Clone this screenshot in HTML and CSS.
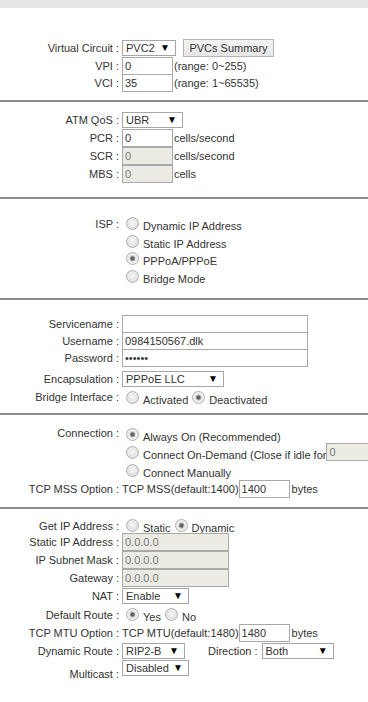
FILE: index.html
```html
<!DOCTYPE html>
<html>
  <head>
    <meta charset="UTF-8">
    <title>WAN Settings</title>
    <link rel="stylesheet" href="styles.css">
  </head>
  <body>
    <div class="topbar"></div>

    <div class="section s-pvc">
      <div class="row">
        <div class="lbl">Virtual Circuit :</div>
        <div class="fld">
          <span class="sel w-pvc"><select><option>PVC2</option></select></span>
          <button class="btn" type="button">PVCs Summary</button>
        </div>
      </div>
      <div class="row r17">
        <div class="lbl">VPI :</div>
        <div class="fld"><input class="txt w-s" type="text" value="0"><span class="note">(range: 0~255)</span></div>
      </div>
      <div class="row">
        <div class="lbl">VCI :</div>
        <div class="fld"><input class="txt w-s" type="text" value="35"><span class="note">(range: 1~65535)</span></div>
      </div>
    </div>
    <div class="sep"></div>

    <div class="section s-qos">
      <div class="row">
        <div class="lbl">ATM QoS :</div>
        <div class="fld"><span class="sel w-ubr"><select><option>UBR</option></select></span></div>
      </div>
      <div class="row">
        <div class="lbl">PCR :</div>
        <div class="fld"><input class="txt w-s" type="text" value="0"><span class="note">cells/second</span></div>
      </div>
      <div class="row">
        <div class="lbl">SCR :</div>
        <div class="fld"><input class="txt w-s" type="text" value="0" disabled><span class="note">cells/second</span></div>
      </div>
      <div class="row">
        <div class="lbl">MBS :</div>
        <div class="fld"><input class="txt w-s" type="text" value="0" disabled><span class="note">cells</span></div>
      </div>
    </div>
    <div class="sep"></div>

    <div class="section s-isp">
      <div class="row rr">
        <div class="lbl">ISP :</div>
        <div class="fld"><input class="rad" type="radio" name="isp"><span class="opt">Dynamic IP Address</span></div>
      </div>
      <div class="row rr">
        <div class="lbl"></div>
        <div class="fld"><input class="rad" type="radio" name="isp"><span class="opt">Static IP Address</span></div>
      </div>
      <div class="row rr">
        <div class="lbl"></div>
        <div class="fld"><input class="rad" type="radio" name="isp" checked><span class="opt">PPPoA/PPPoE</span></div>
      </div>
      <div class="row rr">
        <div class="lbl"></div>
        <div class="fld"><input class="rad" type="radio" name="isp"><span class="opt">Bridge Mode</span></div>
      </div>
    </div>
    <div class="sep"></div>

    <div class="section s-ppp">
      <div class="row r17">
        <div class="lbl">Servicename :</div>
        <div class="fld"><input class="txt w-l" type="text" value=""></div>
      </div>
      <div class="row r17">
        <div class="lbl">Username :</div>
        <div class="fld"><input class="txt w-l" type="text" value="0984150567.dlk"></div>
      </div>
      <div class="row r17">
        <div class="lbl">Password :</div>
        <div class="fld"><input class="txt w-l" type="password" value="123456"></div>
      </div>
      <div class="row r-encap">
        <div class="lbl">Encapsulation :</div>
        <div class="fld"><span class="sel w-encap"><select><option>PPPoE LLC</option></select></span></div>
      </div>
      <div class="row r16">
        <div class="lbl">Bridge Interface :</div>
        <div class="fld">
          <input class="rad" type="radio" name="bridge"><span class="opt">Activated</span>
          <input class="rad" type="radio" name="bridge" checked><span class="opt">Deactivated</span>
        </div>
      </div>
    </div>
    <div class="sep"></div>

    <div class="section s-conn">
      <div class="row">
        <div class="lbl lbl-up">Connection :</div>
        <div class="fld"><input class="rad" type="radio" name="conn" checked><span class="opt">Always On (Recommended)</span></div>
      </div>
      <div class="row">
        <div class="lbl"></div>
        <div class="fld"><input class="rad" type="radio" name="conn"><span class="opt">Connect On-Demand (Close if idle for</span><input class="txt w-idle" type="text" value="0" disabled></div>
      </div>
      <div class="row r19">
        <div class="lbl"></div>
        <div class="fld"><input class="rad" type="radio" name="conn"><span class="opt">Connect Manually</span></div>
      </div>
      <div class="row">
        <div class="lbl">TCP MSS Option :</div>
        <div class="fld">TCP MSS(default:1400)<input class="txt w-s" type="text" value="1400"><span class="note wide">bytes</span></div>
      </div>
    </div>
    <div class="sep"></div>

    <div class="section s-ip">
      <div class="row r15">
        <div class="lbl">Get IP Address :</div>
        <div class="fld">
          <input class="rad" type="radio" name="getip"><span class="opt">Static</span>
          <input class="rad" type="radio" name="getip" checked><span class="opt">Dynamic</span>
        </div>
      </div>
      <div class="row">
        <div class="lbl">Static IP Address :</div>
        <div class="fld"><input class="txt w-m" type="text" value="0.0.0.0" disabled></div>
      </div>
      <div class="row">
        <div class="lbl">IP Subnet Mask :</div>
        <div class="fld"><input class="txt w-m" type="text" value="0.0.0.0" disabled></div>
      </div>
      <div class="row">
        <div class="lbl">Gateway :</div>
        <div class="fld"><input class="txt w-m" type="text" value="0.0.0.0" disabled></div>
      </div>
      <div class="row">
        <div class="lbl">NAT :</div>
        <div class="fld"><span class="sel w-nat"><select><option>Enable</option></select></span></div>
      </div>
      <div class="row r19">
        <div class="lbl">Default Route :</div>
        <div class="fld">
          <input class="rad" type="radio" name="route" checked><span class="opt">Yes</span>
          <input class="rad" type="radio" name="route"><span class="opt">No</span>
        </div>
      </div>
      <div class="row">
        <div class="lbl">TCP MTU Option :</div>
        <div class="fld">TCP MTU(default:1480)<input class="txt w-s" type="text" value="1480"><span class="note wide">bytes</span></div>
      </div>
      <div class="row">
        <div class="lbl">Dynamic Route :</div>
        <div class="fld">
          <span class="sel w-rip"><select><option>RIP2-B</option></select></span>
          <span class="dir">Direction :</span>
          <span class="sel w-dir"><select><option>Both</option></select></span>
        </div>
      </div>
      <div class="row r-multi">
        <div class="lbl lbl-low">Multicast :</div>
        <div class="fld fld-top"><span class="sel w-nat"><select><option>Disabled</option></select></span></div>
      </div>
    </div>
  </body>
</html>
```

FILE: styles.css
```css
body {
  background-color: #fff;
  color: #333;
  font-family: "Liberation Sans", Arial, sans-serif;
  font-size: 11px;
  margin: 0;
  overflow-x: hidden;
  padding: 0;
}

.topbar {
  background-color: #e6e6e6;
  height: 8px;
}

.sep {
  background-color: #8a8a8a;
  height: 2px;
}

.s-pvc {
  padding: 31px 0 8px;
}

.s-qos {
  padding: 9px 0 14px;
}

.s-isp {
  padding: 16px 0 13px;
}

.s-ppp {
  padding: 15px 0 8px;
}

.s-conn {
  padding: 10px 0 9px;
}

.s-ip {
  padding: 9px 0 22px;
}

.row {
  align-items: center;
  display: flex;
  height: 18px;
  white-space: nowrap;
}

.r15 { height: 15px; }
.r16 { height: 16px; }
.r17 { height: 17px; }
.r19 { height: 19px; }
.rr { height: 17.5px; }

.r-encap {
  height: 21px;
  margin-top: 2px;
}

.r-multi {
  align-items: stretch;
  height: 20px;
}

.lbl {
  flex: none;
  text-align: right;
  width: 119px;
}

.lbl-up {
  padding-bottom: 3px;
}

.lbl-low {
  align-self: flex-end;
}

.fld {
  align-items: center;
  display: flex;
  margin-left: 3px;
}

.fld-top {
  align-items: flex-start;
}

.txt {
  background-color: #fff;
  border: 1px solid #a9a9a9;
  box-sizing: border-box;
  color: #333;
  font: inherit;
  height: 18px;
  margin: 0;
  padding: 0 2px;
}

.txt:disabled {
  background-color: #ebebe4;
  color: #7a7a7a;
}

.w-s { width: 51px; }
.w-m { width: 107px; }
.w-l { width: 186px; }
.w-idle { width: 60px; }

.note {
  margin-left: 1px;
}

.note.wide {
  margin-left: 2px;
}

.sel {
  display: inline-block;
  height: 16px;
  position: relative;
}

.sel select {
  -webkit-appearance: none;
  appearance: none;
  background-color: #fff;
  border: 1px solid #a6a6a6;
  border-radius: 0;
  box-sizing: border-box;
  color: #333;
  font: inherit;
  height: 16px;
  margin: 0;
  padding: 0 0 0 3px;
  width: 100%;
}

.sel::after {
  color: #000;
  content: "\25BC";
  font-size: 10px;
  line-height: 16px;
  pointer-events: none;
  position: absolute;
  right: 6px;
  top: 0;
}

.w-pvc { width: 54px; }
.w-ubr { width: 61px; }
.w-encap { width: 102px; }
.w-nat { width: 67px; }
.w-rip { width: 63px; }
.w-dir { width: 72px; }

.dir {
  margin: 0 4px 0 23px;
}

.btn {
  background: linear-gradient(#f4f4f4, #e6e6e6);
  border: 1px solid #b5b5b5;
  box-sizing: border-box;
  color: #333;
  font: inherit;
  height: 18px;
  margin-left: 7px;
  padding: 0;
  width: 91px;
}

.rad {
  -webkit-appearance: none;
  appearance: none;
  background: radial-gradient(circle at 50% 40%, #f6f6f6, #d8d8d8);
  border: 1px solid #b0b0b0;
  border-radius: 50%;
  box-sizing: border-box;
  flex: none;
  height: 13px;
  margin: 0 4px;
  width: 13px;
}

.rad:checked {
  background: radial-gradient(circle, #555 0, #666 1.5px, #d8d8d8 3px, #eee 4px, #f2f2f2);
}

.opt {
  padding-top: 5px;
}
```
